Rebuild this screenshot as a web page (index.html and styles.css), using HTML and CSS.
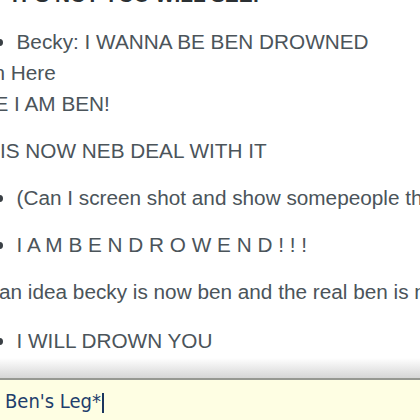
FILE: index.html
```html
<!DOCTYPE html>
<html>
<head>
<meta charset="utf-8">
<link rel="stylesheet" href="styles.css">
</head>
<body>
<div class="page">
  <div class="log">
    <div class="log-inner">
      <div class="title">IT'S NOT YOU WILL SEE!</div>
      <div class="msg gap-first">
        <div class="line bullet">Becky: I WANNA BE BEN DROWNED</div>
        <div class="line cut-n">n Here</div>
        <div class="line cut-e">E I AM BEN!</div>
      </div>
      <div class="msg">
        <div class="line">IS NOW NEB DEAL WITH IT</div>
      </div>
      <div class="msg">
        <div class="line bullet">(Can I screen shot and show somepeople this?)</div>
      </div>
      <div class="msg">
        <div class="line bullet">I A M B E N D R O W E N D ! ! !</div>
      </div>
      <div class="msg">
        <div class="line cut-a">an idea becky is now ben and the real ben is now becky</div>
      </div>
      <div class="msg gap-last">
        <div class="line bullet">I WILL DROWN YOU</div>
      </div>
    </div>
  </div>
  <div class="input-bar">
    <span class="input-text">Ben's Leg*</span><span class="caret"></span>
  </div>
</div>
</body>
</html>
```
FILE: styles.css
```css
html, body {
  margin: 0;
  padding: 0;
  background: #ffffff;
}

.page {
  width: 420px;
  height: 420px;
  display: flex;
  flex-direction: column;
  overflow: hidden;
}

.log {
  flex: 1;
  overflow: hidden;
  background: linear-gradient(to bottom, #ffffff calc(100% - 20px), #d6d6d6 100%);
  font-family: "Liberation Sans", Arial, sans-serif;
  font-size: 20.75px;
  line-height: 31px;
  color: #4b545a;
}

.log-inner {
  margin-top: -21px;
  display: flex;
  flex-direction: column;
}

.title {
  font-weight: bold;
  color: #2b3033;
  padding-left: 12px;
  white-space: nowrap;
}

.msg {
  margin-top: 16px;
}

.msg.gap-first {
  margin-top: 15.5px;
}

.msg.gap-last {
  margin-top: 18px;
}

.line {
  white-space: nowrap;
}

.bullet::before {
  content: "";
  display: inline-block;
  width: 7px;
  height: 7px;
  border-radius: 50%;
  background: #3a4045;
  margin-left: -4px;
  margin-right: 13.5px;
  vertical-align: 3px;
}

.cut-n {
  margin-left: -6.5px;
}

.cut-e {
  margin-left: -5.5px;
}

.cut-a {
  margin-left: -1px;
}

.input-bar {
  height: 42px;
  box-sizing: border-box;
  border-top: 2px solid #969892;
  background: #fefee3;
  padding: 1.5px 0 0 5px;
  font-family: "DejaVu Sans Condensed", "DejaVu Sans", sans-serif;
  font-size: 20px;
  line-height: 38.5px;
  color: #1f3e6c;
  white-space: nowrap;
}

.caret {
  display: inline-block;
  width: 1.5px;
  height: 20px;
  background: #1b355e;
  margin-left: 1px;
  vertical-align: -5px;
}
```
